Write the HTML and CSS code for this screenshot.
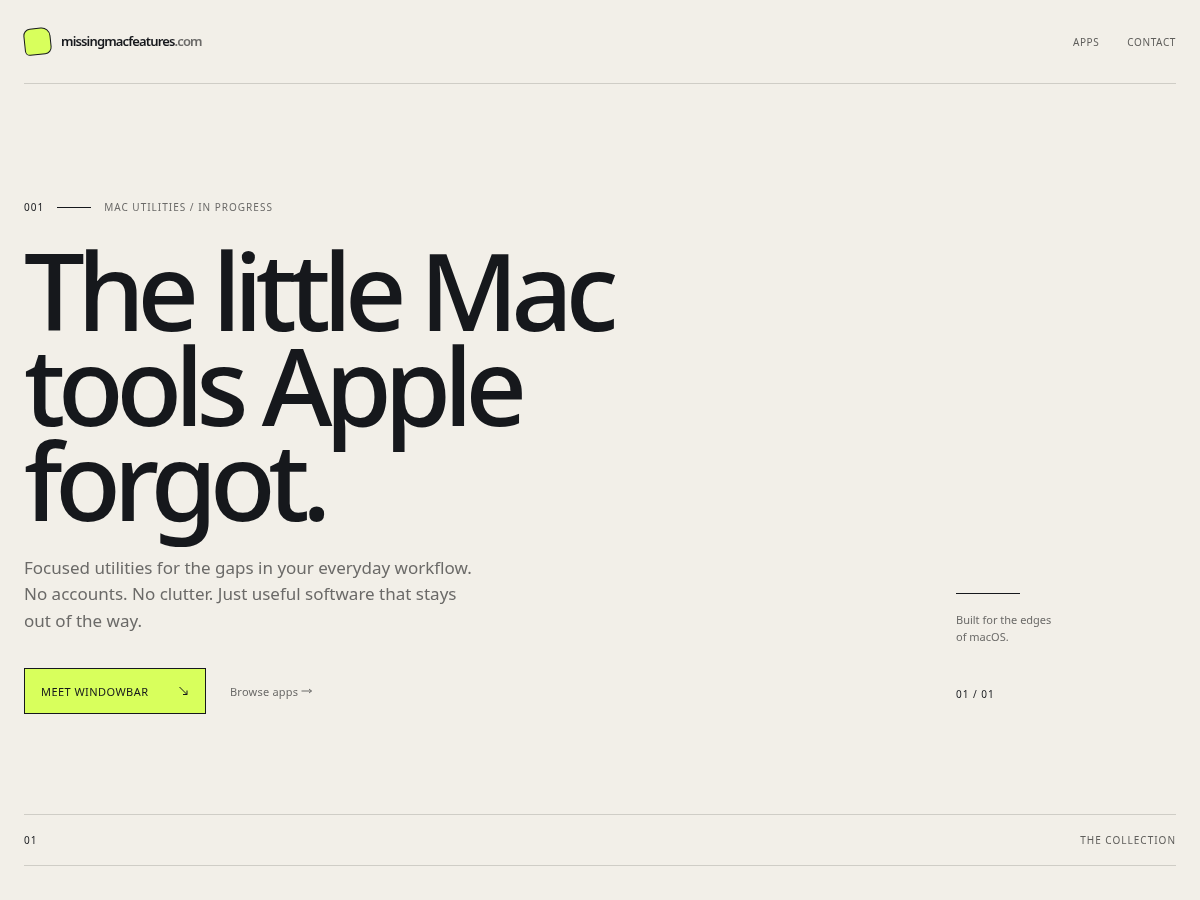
FILE: index.html
```html
<!DOCTYPE html>
<html lang="en">
<head>
<meta charset="utf-8">
<title>missingmacfeatures.com</title>
<link rel="stylesheet" href="styles.css">
</head>
<body>
<div class="page">
  <header class="topbar">
    <a class="brand" href="#">
      <span class="brand-mark"></span>
      <span class="brand-name">missingmacfeatures<span class="brand-tld">.com</span></span>
    </a>
    <nav class="nav">
      <a href="#">APPS</a>
      <a href="#">CONTACT</a>
    </nav>
  </header>
  <main class="hero">
    <div class="eyebrow">
      <span class="eyebrow-num">001</span>
      <span class="eyebrow-rule"></span>
      <span class="eyebrow-text">MAC UTILITIES / IN PROGRESS</span>
    </div>
    <h1 class="headline">The little Mac<br>tools Apple<br>forgot.</h1>
    <div class="hero-lower">
      <div class="hero-main">
        <p class="lede">Focused utilities for the gaps in your everyday workflow. No accounts. No clutter. Just useful software that stays out of the way.</p>
        <div class="actions">
          <a class="cta" href="#"><span class="cta-label">MEET WINDOWBAR</span>
            <svg class="cta-arrow" viewBox="0 0 10 10" width="10" height="10" aria-hidden="true"><path d="M0.5 1 L8 8.5 M8 4.5 V8.5 H4"/></svg>
          </a>
          <a class="browse" href="#"><span class="browse-label">Browse apps</span>
            <svg class="browse-arrow" viewBox="0 0 12 8" width="12" height="8" aria-hidden="true"><path d="M0.5 4 H10.5 M8 2 L10.5 4 L8 6"/></svg>
          </a>
        </div>
      </div>
      <aside class="side">
        <span class="side-rule"></span>
        <p class="side-note">Built for the edges<br>of macOS.</p>
        <span class="side-count">01 / 01</span>
      </aside>
    </div>
  </main>
  <section class="collection">
    <span class="collection-num">01</span>
    <span class="collection-title">THE COLLECTION</span>
  </section>
</div>
</body>
</html>
```
FILE: styles.css
```css
* { box-sizing: border-box; }
html, body { margin: 0; padding: 0; }
body {
  background: #f2efe8;
  color: #16181c;
  font-family: "Noto Sans", sans-serif;
  height: 900px;
  overflow: hidden;
}
a { color: inherit; text-decoration: none; }
.page { padding: 0 24px; will-change: transform; }
.topbar {
  height: 84px;
  border-bottom: 1px solid #cfcdc6;
  display: flex;
  align-items: center;
  justify-content: space-between;
}
.brand { display: flex; align-items: center; gap: 10px; }
.brand-mark {
  width: 27px;
  height: 27px;
  background: #d8ff5c;
  border: 1px solid #16181c;
  border-radius: 7px 9px 7px 5px;
  transform: rotate(-6deg);
}
.brand-name { font-size: 13px; font-weight: 600; letter-spacing: -0.065em; padding-bottom: 2px; }
.brand-tld { color: #6b6a68; }
.nav { display: flex; gap: 28px; font-size: 10px; letter-spacing: 0.06em; color: #5f5e5b; }
.hero { padding-top: 116px; }
.eyebrow { display: flex; align-items: center; font-size: 10px; line-height: 14px; letter-spacing: 0.1em; height: 14px; }
.eyebrow-rule { width: 34px; height: 1px; background: #16181c; margin: 0 13px; }
.eyebrow-text { color: #6b6a68; }
.headline {
  margin: 29px 0 0;
  font-size: 108px;
  line-height: 94.8px;
  font-weight: 500;
  letter-spacing: -0.07em;
}
.hero-lower { display: flex; justify-content: space-between; align-items: flex-end; }
.hero-main { width: 480px; }
.lede { margin: 0; padding-top: 27.6px; font-size: 17px; line-height: 26.35px; color: #6b6a68; width: 460px; }
.actions { display: flex; align-items: center; gap: 24px; margin-top: 33.95px; }
.cta {
  width: 182px;
  height: 46px;
  padding: 0 16px;
  display: flex;
  align-items: center;
  justify-content: space-between;
  background: #d8ff5c;
  border: 1px solid #16181c;
  font-size: 11px;
  letter-spacing: 0.04em;
}
.cta-label, .browse-label { padding-top: 2px; }
.cta-arrow { fill: none; stroke: #16181c; stroke-width: 1; }
.browse { display: flex; align-items: center; gap: 3px; font-size: 11px; letter-spacing: 0.02em; color: #6b6a68; }
.browse-arrow { fill: none; stroke: #6b6a68; stroke-width: 1; margin-top: 1px; }
.side { width: 220px; display: flex; flex-direction: column; align-items: flex-start; padding-bottom: 13px; }
.side-rule { width: 64px; height: 1px; background: #16181c; }
.side-note { margin: 17px 0 0; font-size: 11px; line-height: 17px; color: #6b6a68; }
.side-count { margin-top: 42px; font-size: 10px; letter-spacing: 0.1em; }
.collection {
  margin-top: 100px;
  height: 52px;
  border-top: 1px solid #cfcdc6;
  border-bottom: 1px solid #cfcdc6;
  display: flex;
  align-items: center;
  justify-content: space-between;
  font-size: 10px;
  letter-spacing: 0.1em;
}
.collection-title { color: #5f5e5b; }
```
